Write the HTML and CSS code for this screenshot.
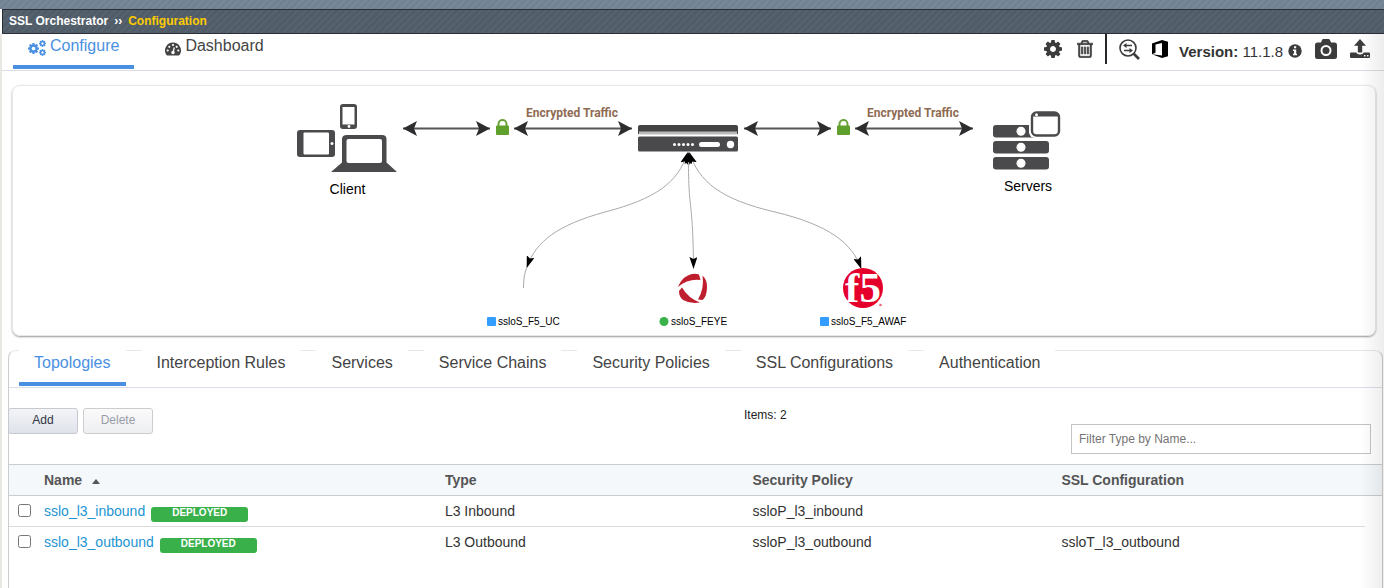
FILE: index.html
```html
<!DOCTYPE html>
<html lang="en">
<head>
<meta charset="utf-8">
<meta name="viewport" content="width=device-width, initial-scale=1">
<title>SSL Orchestrator - Configuration</title>
<link rel="stylesheet" href="styles.css">
</head>
<body>
<svg class="defs" aria-hidden="true">
  <symbol id="cog" viewBox="128 128 1536 1536"><path d="M1152 896q0-106-75-181t-181-75-181 75-75 181 75 181 181 75 181-75 75-181zm512-109v222q0 12-8 23t-20 13l-185 28q-19 54-39 91 35 50 107 138 10 12 10 25t-9 23q-27 37-99 108t-94 71q-12 0-26-9l-138-108q-44 23-91 38-16 136-29 186-7 28-36 28h-222q-14 0-24.500-8.500t-11.500-21.500l-28-184q-49-16-90-37l-141 107q-10 9-25 9-14 0-25-11-126-114-165-168-7-10-7-23 0-12 8-23 15-21 51-66.500t54-70.500q-27-50-41-99l-183-27q-13-2-21-12.500t-8-23.500v-222q0-12 8-23t19-13l186-28q14-46 39-92-40-57-107-138-10-12-10-24 0-10 9-23 26-36 98.500-107.500t94.500-71.500q13 0 26 10l138 107q44-23 91-38 16-136 29-186 7-28 36-28h222q14 0 24.500 8.500t11.500 21.500l28 184q49 16 90 37l142-107q9-9 24-9 13 0 25 10 129 119 165 170 7 8 7 22 0 12-8 23-15 21-51 66.500t-54 70.500q26 50 41 98l183 28q13 2 21 12.500t8 23.500z"/></symbol>
</svg>
<div class="strip"></div>
<header class="crumbs"><span>SSL Orchestrator</span><span class="sep">››</span><span class="current">Configuration</span></header>
<main class="page">
  <div class="topbar">
    <nav class="tabs" aria-label="Main">
      <a class="tab active" href="#configure">
        <svg class="tab-icon" width="18" height="18" viewBox="0 0 18 18" fill="currentColor" aria-hidden="true"><use href="#cog" x="0" y="3" width="11" height="11"/><use href="#cog" x="11" y="0" width="7" height="7"/><use href="#cog" x="11" y="9" width="7" height="7"/></svg>
        Configure</a>
      <a class="tab" href="#dashboard">
        <svg class="tab-icon" width="16" height="18" viewBox="0 0 16 18" aria-hidden="true"><path fill="currentColor" d="M8 2.500a8 8 0 0 1 6.700 12.300q-.4.700-1.100.7H2.400q-.7 0-1.100-.7A8 8 0 0 1 8 2.500z"/><g fill="#fff"><circle cx="2.700" cy="10.500" r="1.100"/><circle cx="4.300" cy="6.800" r="1.100"/><circle cx="8" cy="5" r="1.100"/><circle cx="11.700" cy="6.800" r="1.100"/><circle cx="13.300" cy="10.500" r="1.100"/></g><path d="M8 12.500L9.300 7.500" stroke="#fff" stroke-width="1.200"/><circle cx="8" cy="12.500" r="1.700" fill="#fff"/></svg>
        Dashboard</a>
    </nav>
    <div class="tools">
      <button class="tool" aria-label="Settings"><svg width="18" height="18" fill="currentColor"><use href="#cog"/></svg></button>
      <button class="tool trash" aria-label="Delete all"><svg width="16" height="18" viewBox="192 128 1408 1536" fill="currentColor" stroke="currentColor" stroke-width="50"><path d="M704 736v576q0 14-9 23t-23 9h-64q-14 0-23-9t-9-23v-576q0-14 9-23t23-9h64q14 0 23 9t9 23zm256 0v576q0 14-9 23t-23 9h-64q-14 0-23-9t-9-23v-576q0-14 9-23t23-9h64q14 0 23 9t9 23zm256 0v576q0 14-9 23t-23 9h-64q-14 0-23-9t-9-23v-576q0-14 9-23t23-9h64q14 0 23 9t9 23zm128 724v-948h-896v948q0 22 7 40.500t14.500 27 10.500 8.500h832q3 0 10.500-8.500t14.500-27 7-40.500zm-672-1076h448l-48-117q-7-9-17-11h-317q-10 2-17 11zm928 32v64q0 14-9 23t-23 9h-96v948q0 83-47 143.500t-113 60.500h-832q-66 0-113-58.500t-47-141.500v-952h-96q-14 0-23-9t-9-23v-64q0-14 9-23t23-9h309l70-167q15-37 54-63t79-26h320q40 0 79 26t54 63l70 167h309q14 0 23 9t9 23z"/></svg></button>
      <span class="divider"></span>
      <button class="tool search" aria-label="Inspect traffic"><svg width="21" height="21" viewBox="0 0 21 21" fill="none" stroke="currentColor"><circle cx="9" cy="9" r="8" stroke-width="1.600"/><path d="M14.500 14.500L20 20" stroke-width="2.600"/><path d="M6 6.500h7M5 11.500h7" stroke-width="1.400"/><path d="M7.500 4v5L4 6.500zM10.500 9v5L14 11.500z" fill="currentColor" stroke="none"/></svg></button>
      <button class="tool office" aria-label="Office"><svg width="16" height="18" viewBox="0 0 16 18"><path fill="#000" d="M0 3.500L10 0l6 1.800v14.400L10 18 0 14.300l10 1.200V3L3.500 4.500v8.300L0 14.300z"/></svg></button>
      <span class="version"><b>Version:</b> 11.1.8</span>
      <button class="tool info" aria-label="Version details"><svg width="14" height="14" viewBox="0 0 14 14"><circle cx="7" cy="7" r="6.700" fill="currentColor"/><path fill="#fff" d="M6 2.200h2.200v2H6zM5 5.400h3.200v4.400H9v1.500H5V9.800h1V6.900H5z"/></svg></button>
      <button class="tool camera" aria-label="Snapshot"><svg width="22" height="20" viewBox="0 0 22 20"><path fill="currentColor" fill-rule="evenodd" d="M2.500 3.500H6L7 1q.4-1 1.500-1h5q1.100 0 1.500 1l1 2.500h3.500Q22 3.500 22 6v11.500q0 2.500-2.500 2.500h-17Q0 20 0 17.500V6q0-2.500 2.500-2.500zM11 6a5.500 5.500 0 1 0 0 11 5.500 5.500 0 0 0 0-11zm0 2a3.500 3.500 0 1 1 0 7 3.500 3.500 0 0 1 0-7z"/></svg></button>
      <button class="tool" aria-label="Upload"><svg width="20" height="20" viewBox="0 0 20 20"><path fill="currentColor" fill-rule="evenodd" d="M10 0l6 6.800h-3.800v6.700H7.800V6.800H4zM1 13.500h5.300q.5 2 3.700 2t3.700-2H19q1 0 1 1V18q0 1-1 1H1q-1 0-1-1v-3.500q0-1 1-1zM14 16v1.500h1.500V16zm3 0v1.500h1.500V16z"/></svg></button>
    </div>
  </div>

  <section class="card" aria-label="Traffic diagram">
    <svg class="diagram" width="800" height="249" viewBox="294 86 800 249">
      <defs>
        <marker id="big" viewBox="0 0 14 16" refX="14" refY="8" markerWidth="14" markerHeight="16" markerUnits="userSpaceOnUse" orient="auto-start-reverse"><path d="M0 0.500L14 8 0 15.500 3 8z" fill="#2d2d2f"/></marker>
        <marker id="small" viewBox="0 0 12 8" refX="11" refY="4" markerWidth="12" markerHeight="8" markerUnits="userSpaceOnUse" orient="auto-start-reverse"><path d="M0 0L12 4 0 8 2 4z"/></marker>
        <g id="lock"><path d="M2.500 127v-3a4 4 0 0 1 8 0v3" fill="none" stroke="#6aa339" stroke-width="2"/><rect y="125.500" width="13" height="9.500" rx="1" fill="#5fa02c"/></g>
      </defs>
      <g fill="#4a4a4c">
        <rect x="340" y="104" width="17" height="25" rx="3"/><rect x="342.500" y="107" width="12" height="17.500" fill="#fff"/><circle cx="349" cy="126.500" r="1.400" fill="#fff"/>
        <rect x="297" y="130" width="38" height="27" rx="3"/><rect x="303.500" y="132.500" width="25.500" height="22" rx="1" fill="#fff"/><circle cx="332" cy="143.500" r="1.500" fill="#fff"/>
        <path d="M347 135h35q4.500 0 4.500 4v23.500l10.500 9.500h-66l11-9.500V139q0-4 5-4z"/><rect x="346.500" y="139" width="35.500" height="24" rx="2" fill="#fff"/>
      </g>
      <g stroke="#555557" stroke-width="2">
        <path d="M403 128.500H490" marker-start="url(#big)" marker-end="url(#big)"/>
        <path d="M514 128.500H632" marker-start="url(#big)" marker-end="url(#big)"/>
        <path d="M744 128.500H831" marker-start="url(#big)" marker-end="url(#big)"/>
        <path d="M855 128.500H973" marker-start="url(#big)" marker-end="url(#big)"/>
      </g>
      <use href="#lock" x="496"/><use href="#lock" x="837"/>
      <text class="traffic" x="572" y="117">Encrypted Traffic</text>
      <text class="traffic" x="913" y="117">Encrypted Traffic</text>
      <path d="M638 134v-7q0-2 2-2h96q2 0 2 2v7z" fill="#434345"/><path d="M639 131.500h98v3h-98z" fill="#b9bab9"/>
      <rect x="638" y="136.500" width="100" height="15" rx="1.500" fill="#4a4a4c"/>
      <g fill="#fff"><circle cx="674.500" cy="144.500" r="1.500"/><circle cx="679" cy="144.500" r="1.500"/><circle cx="683.500" cy="144.500" r="1.500"/><circle cx="688" cy="144.500" r="1.500"/><circle cx="692.500" cy="144.500" r="1.500"/><rect x="699" y="142" width="21" height="5" rx="2.500"/><circle cx="730.500" cy="144.500" r="3.700"/></g>
      <g fill="#4a4a4c"><rect x="993" y="125" width="56" height="12.500" rx="3"/><rect x="993" y="141" width="56" height="12.500" rx="3"/><rect x="993" y="157" width="56" height="12.500" rx="3"/></g>
      <g fill="#fff"><circle cx="1021" cy="131.300" r="4.500"/><circle cx="1021" cy="147.300" r="4.500"/><circle cx="1021" cy="163.300" r="4.500"/><rect x="1029" y="109" width="34" height="29" rx="6"/></g>
      <rect x="1032" y="112.500" width="27" height="23" rx="4.500" fill="#fff" stroke="#4a4a4c" stroke-width="2.400"/><path d="M1033 116.500q0-4 4-4h18q4 0 4 4z" fill="#4a4a4c"/><circle cx="1036.500" cy="114.700" r="1.500" fill="#fff"/>
      <text class="host" x="347.500" y="194">Client</text>
      <text class="host" x="1028" y="191">Servers</text>
      <g fill="none" stroke="#aaa">
        <path d="M687.500 153C678 183 655 199 605 212C558 225 536 241 527 267" marker-start="url(#small)" marker-end="url(#small)"/>
        <path d="M527 267Q523.500 274 523.500 288"/>
        <path d="M688.500 153C688 215 693 195 693.500 268" marker-start="url(#small)" marker-end="url(#small)"/>
        <path d="M689.500 153C699 181 719 199 775 212C829 225 852 243 861 268" marker-start="url(#small)" marker-end="url(#small)"/>
      </g>
      <g fill="#be1e2d"><path d="M678 287Q681 279 687 276 693 272.500 699 274.500L700.500 280Q688 278.500 678 287z"/><path d="M702.500 275.500Q707.500 280 707 288 706.500 297 702.500 300L698 299.500Q704.500 288 702.500 275.500z"/><path d="M679 291L682 287.500Q688 298 700 302.500 690 304 683 300 679 297 679 291z"/></g>
      <circle cx="863" cy="288" r="20" fill="#e4002b"/>
      <text class="f5" x="863" y="302">f5</text>
      <circle cx="880.500" cy="305" r="1.300" fill="#e4002b" fill-opacity=".6"/>
      <rect x="487" y="317" width="9" height="9" rx="1" fill="#339eff"/><text class="node" x="498" y="325">ssloS_F5_UC</text>
      <circle cx="664" cy="321.500" r="4.500" fill="#39b24a"/><text class="node" x="671" y="325">ssloS_FEYE</text>
      <rect x="820" y="317" width="9" height="9" rx="1" fill="#339eff"/><text class="node" x="831" y="325">ssloS_F5_AWAF</text>
    </svg>
  </section>

  <section class="panel">
    <nav class="subtabs" aria-label="Configuration">
      <a class="tab active" href="#topologies">Topologies</a>
      <a class="tab" href="#rules">Interception Rules</a>
      <a class="tab" href="#services">Services</a>
      <a class="tab" href="#chains">Service Chains</a>
      <a class="tab" href="#policies">Security Policies</a>
      <a class="tab" href="#ssl">SSL Configurations</a>
      <a class="tab" href="#auth">Authentication</a>
    </nav>
    <div class="actions">
      <div class="buttons"><button class="btn">Add</button><button class="btn" disabled>Delete</button></div>
      <span class="count">Items: 2</span>
      <input class="filter" type="text" placeholder="Filter Type by Name..." aria-label="Filter Type by Name">
    </div>
    <table class="grid">
      <colgroup><col class="c-check"><col class="c-name"><col class="c-type"><col class="c-policy"><col><col class="c-end"></colgroup>
      <thead><tr><th></th><th scope="col">Name <svg class="sort" width="8" height="5" viewBox="0 0 8 5" aria-hidden="true"><path d="M4 0l4 5H0z" fill="#555"/></svg></th><th scope="col">Type</th><th scope="col">Security Policy</th><th scope="col">SSL Configuration</th><th></th></tr></thead>
      <tbody>
        <tr><td><input class="check" type="checkbox" aria-label="Select sslo_l3_inbound"></td><td><div class="name"><a href="#inbound">sslo_l3_inbound</a><span class="badge">DEPLOYED</span></div></td><td>L3 Inbound</td><td>ssloP_l3_inbound</td><td></td><td></td></tr>
        <tr><td><input class="check" type="checkbox" aria-label="Select sslo_l3_outbound"></td><td><div class="name"><a href="#outbound">sslo_l3_outbound</a><span class="badge">DEPLOYED</span></div></td><td>L3 Outbound</td><td>ssloP_l3_outbound</td><td>ssloT_l3_outbound</td><td></td></tr>
      </tbody>
    </table>
  </section>
</main>
<div class="edge"></div>
</body>
</html>
```
FILE: styles.css
```css
* { box-sizing: border-box; }
html, body { height: 100%; }
body {
  margin: 0;
  display: flex;
  flex-direction: column;
  background: #fff;
  color: #333;
  font-family: "Liberation Sans", Arial, sans-serif;
  font-size: 14px;
  overflow-x: hidden;
}
a { color: inherit; text-decoration: none; }
button, input { font-family: inherit; }
.defs { position: absolute; width: 0; height: 0; }

.strip {
  flex: none;
  height: 9px;
  background: repeating-linear-gradient(135deg, #718293 0 3px, #788898 3px 5px);
}
.crumbs {
  flex: none;
  display: flex;
  align-items: center;
  gap: 6px;
  height: 25px;
  padding: 0 6px 2px;
  border: 1px solid #2b2e36;
  border-right: 0;
  margin-left: 2px;
  background: repeating-linear-gradient(135deg, #505c68 0 3px, #56626e 3px 5px);
  color: #fff;
  font-size: 12px;
  font-weight: bold;
}
.crumbs .current { color: #fc0; }

.page {
  flex: 1;
  display: flex;
  flex-direction: column;
  border-left: 2px solid #e9e8e4;
}
.topbar {
  display: flex;
  justify-content: space-between;
  height: 37px;
  padding: 0 14px 0 11px;
  border-bottom: 1px solid #dcdce4;
}
.tabs { display: flex; gap: 16px; }
.tab {
  display: flex;
  padding: 0 15px;
  font-size: 16px;
  color: #444;
  border-bottom: 4px solid transparent;
}
.tab.active { color: #4a90e2; border-bottom-color: #4a90e2; }
.topbar .tab { height: 35px; gap: 4px; padding-top: 3px; line-height: 18px; }
.tab-icon { margin-top: 3px; }

.tools { display: flex; align-items: center; height: 30px; color: #333; }
.tool {
  display: flex;
  padding: 0;
  border: 0;
  background: none;
  color: #3c3c3c;
  cursor: pointer;
}
.trash { margin: 0 12px 0 15px; }
.divider { width: 2px; height: 30px; background: #26262a; }
.search { margin: 0 12px; }
.office { margin-right: 11px; }
.version { font-size: 15px; padding-top: 4px; }
.info { margin: 4px 13px 0 5px; }
.camera { margin-right: 13px; }

.card {
  display: flex;
  justify-content: center;
  margin: 14px 8px 0 10px;
  border: 1px solid #e8e8ea;
  border-radius: 8px;
  box-shadow: 0 1px 2px #999;
}
.diagram { flex: none; }
.traffic { font: 700 12px Roboto, sans-serif; fill: #8f6b52; text-anchor: middle; }
.host { font-size: 14px; fill: #000; text-anchor: middle; }
.node { font-size: 10px; fill: #000; }
.f5 { font: bold 43px "Liberation Serif", serif; fill: #fff; text-anchor: middle; }

.panel {
  flex: 1;
  margin: 14px 1px 0 6px;
  border: 1px solid #e8e8ea;
  border-width: 1px 1px 0;
  border-left-color: #ccc;
  border-right-color: #ccc;
  border-radius: 8px 8px 0 0;
}
.subtabs {
  display: flex;
  gap: 16px;
  height: 38px;
  padding-left: 10px;
  margin-top: -1px;
  border-bottom: 1px solid #dcdfe8;
}
.subtabs .tab { height: 36px; padding-top: 3px; line-height: 20px; background: #fff; }

.actions {
  display: grid;
  grid-template-columns: 54% auto 1fr;
  height: 76px;
  margin-left: -1px;
  padding: 20px 11px 0 0;
}
.buttons { display: flex; gap: 5px; }
.btn {
  width: 70px;
  height: 26px;
  padding: 0 0 2px;
  border: 1px solid #c6c9d2;
  border-radius: 3px;
  background: linear-gradient(#f3f5f8, #dfe2e9);
  color: #2f3542;
  font-size: 12px;
}
.btn:disabled { background: linear-gradient(#fafafb, #eeeff2); border-color: #ccc; color: #999da6; }
.count { font-size: 12px; color: #222; }
.filter {
  justify-self: end;
  width: 300px;
  height: 30px;
  margin-top: 16px;
  padding: 0 7px;
  border: 1px solid #c4c4c4;
  font-size: 12px;
}
.filter::placeholder { color: #757575; }

.grid { width: 100%; border-collapse: collapse; table-layout: fixed; }
.c-check { width: 35px; }
.c-name { width: 29.2%; }
.c-type { width: 22.4%; }
.c-policy { width: 22.5%; }
.c-end { width: 17px; }
.grid th, .grid td { padding: 0; text-align: left; }
.grid thead { background: #f4f8fb; }
.grid th { height: 31px; border: solid #ccc; border-width: 1px 0; color: #555; }
.grid td { height: 31px; }
.grid tbody tr:not(:last-child) td:not(:last-child) { border-bottom: 1px solid #dcdcdc; }
.sort { margin: 0 0 1px 6px; }
.check { display: block; width: 13px; height: 13px; margin: 0 0 2px 9px; }
.name { display: flex; align-items: center; gap: 6px; color: #1c94d2; }
.badge {
  width: 97px;
  height: 15px;
  margin-top: 6px;
  border-radius: 3px;
  background: #39b04a;
  color: #fff;
  font-size: 10px;
  font-weight: bold;
  line-height: 12px;
  text-align: center;
}

.edge {
  position: fixed;
  inset: 34px 0 0 auto;
  width: 24px;
  background: linear-gradient(to right, transparent, rgba(0, 0, 0, .07));
  pointer-events: none;
}
```
